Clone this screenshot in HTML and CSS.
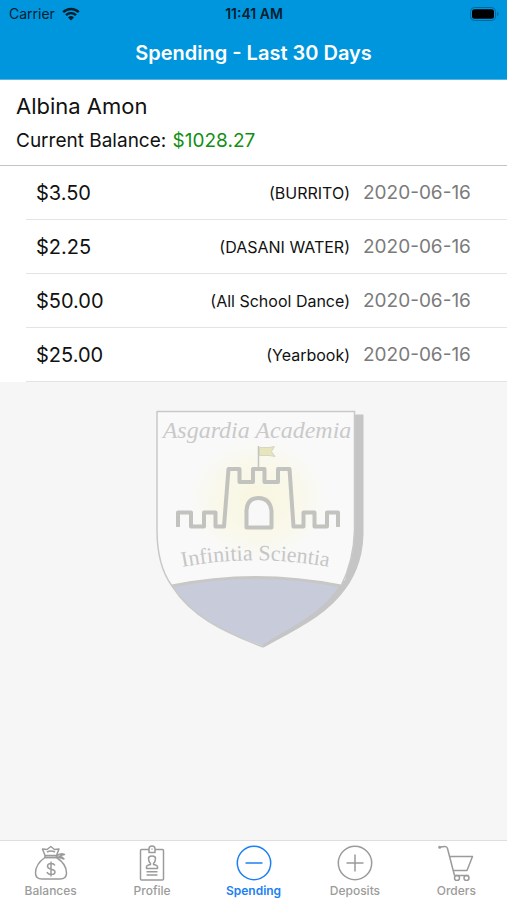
FILE: index.html
```html
<!DOCTYPE html>
<html lang="en">
<head>
<meta charset="utf-8">
<meta name="viewport" content="width=device-width, initial-scale=1">
<title>Spending - Last 30 Days</title>
<link rel="stylesheet" href="styles.css">
</head>
<body>
<header class="top">
  <div class="status">
    <div class="status-side">
      <span>Carrier</span>
      <svg class="wifi" viewBox="0 0 18 14" aria-hidden="true">
        <path d="M1.2 5.2a11 11 0 0 1 15.6 0M4 8.2a7 7 0 0 1 10 0" fill="none" stroke="currentColor" stroke-width="2.4"/>
        <path d="M9 13.6 6 10.5a4.300 4.300 0 0 1 6 0z" fill="currentColor"/>
      </svg>
    </div>
    <span class="clock">11:41 AM</span>
    <div class="status-side status-end">
      <svg class="battery" viewBox="0 0 30 14" aria-hidden="true">
        <rect x="1.500" y=".5" width="25" height="13" rx="4" fill="none" stroke="#05669b"/>
        <rect x="3" y="2.300" width="22" height="9.400" rx="2.500" fill="#000"/>
        <path d="M28 5v4q1.600-.6 1.600-2t-1.600-2z" fill="#05669b"/>
      </svg>
    </div>
  </div>
  <h1 class="title">Spending - Last 30 Days</h1>
</header>

<main class="content">
  <section class="account">
    <h2 class="name">Albina Amon</h2>
    <p class="balance">Current Balance: <span class="amount">$1028.27</span></p>
  </section>

  <div class="list">
    <table class="spending">
      <tbody>
        <tr><td class="price">$3.50</td><td class="item">(BURRITO)</td><td class="date">2020-06-16</td></tr>
        <tr><td class="price">$2.25</td><td class="item">(DASANI WATER)</td><td class="date">2020-06-16</td></tr>
        <tr><td class="price">$50.00</td><td class="item">(All School Dance)</td><td class="date">2020-06-16</td></tr>
        <tr><td class="price">$25.00</td><td class="item">(Yearbook)</td><td class="date">2020-06-16</td></tr>
      </tbody>
    </table>
  </div>

  <svg class="crest" viewBox="143 400 221 250" role="img" aria-label="Asgardia Academia crest">
    <defs>
      <radialGradient id="glow">
        <stop offset="0" stop-color="#f8f6e0"/>
        <stop offset=".6" stop-color="#f9f8ea"/>
        <stop offset="1" stop-color="#f9f9f9"/>
      </radialGradient>
      <path id="motto" d="M183 567Q256 553 334 568"/>
    </defs>
    <path d="M354 414.500H363.500V534C363 560 354 580 340 596C322 617 296 630 263.500 647.500L250 638L345 580L354 540Z" fill="#c5c5c5"/>
    <path d="M157 411.500H354.500V530C354 552 349 570 341 586C325 611 297 626 263 646C222 631 191 617 172 586C161 571 157 553 157 530Z" fill="#f9f9f9"/>
    <ellipse cx="258" cy="500" rx="68" ry="60" fill="url(#glow)"/>
    <path d="M172 586Q255 569 341 586C325 612 297 626 263 646C222 631 191 615 172 586Z" fill="#c8cbda"/>
    <path d="M172 586Q255 569 341 586" fill="none" stroke="#c7c8c5" stroke-width="3"/>
    <path d="M341 586C325 612 297 626 263 646" fill="none" stroke="#c5c5c5" stroke-width="3"/>
    <path d="M157 411.500H354.500V530C354 552 349 570 341 586M263 647C222 631 191 616 172 586C161 571 157 553 157 530V411" fill="none" stroke="#c8c9c7" stroke-width="1.500"/>
    <path d="M178 527V512.500H191V526.500H204V512.500H215.500V526.500H224L228.500 469H239.500V482H253V469H264.500V482H278V469H289.500L293.500 526.500H303.500V512.500H314.500V526.500H327V512.500H338V527" fill="none" stroke="#c2c2bf" stroke-width="4" stroke-linejoin="round"/>
    <path d="M246.500 527.500V511Q247 498 258.500 498T271.500 511V527.500Z" fill="#f8f8f8" stroke="#c2c2bf" stroke-width="4" stroke-linejoin="round"/>
    <path d="M258.500 446V468" stroke="#c4c4c0" stroke-width="1.500"/>
    <path d="M259.500 447.500H269L274.500 446.500L271.500 451.500L275 456.500L269 455.500H259.500Z" fill="#e7e5bb" stroke="#cfcfbd" stroke-width=".8"/>
    <text class="crest-name" x="257" y="438" text-anchor="middle">Asgardia Academia</text>
    <text class="crest-motto" text-anchor="middle"><textPath href="#motto" startOffset="48%">Infinitia Scientia</textPath></text>
  </svg>
</main>

<nav class="tabs">
  <a class="tab" href="#balances">
    <svg class="icon" viewBox="0 0 36 36" aria-hidden="true">
      <path d="M12 12.500Q2.500 19 2.500 28Q2.500 34 9 34H27Q33.500 34 33.500 28Q33.500 19 23.500 12.500Z"/>
      <path d="M12 10.500H23.500V12.500H12ZM12 10.500L9.500 4L14 4.500L17.800 1.500L21.500 4.500L26 4L23.500 10.500M14 7Q18 5 22 7M23.500 11.500Q27 7.500 31.500 9.500Q28 10 26 11.500Q29 11 31 14Q27.500 12 24 12.500"/>
      <path d="M22 20.500Q21 18.500 18 18.500Q14.500 18.500 14.500 21.300Q14.500 23.500 18 24.200Q22 25 22 27Q22 29.500 18 29.500Q15 29.500 14 27M18 16.500V31.500"/>
    </svg>
    <span>Balances</span>
  </a>
  <a class="tab" href="#profile">
    <svg class="icon" viewBox="0 0 36 36" aria-hidden="true">
      <path d="M15 4.500H7.500Q6.500 4.500 6.500 5.500V34Q6.500 35 7.500 35H28.500Q29.500 35 29.500 34V5.500Q29.500 4.500 28.500 4.500H21"/>
      <path d="M15 7.500V4Q15 1 18 1T21 4V7.500ZM17.500 4H18.500"/>
      <path d="M12.500 23.500V21.500Q12.500 20.500 16.500 19.500V18.500Q14.500 16.500 14.500 13.500Q14.500 11 18 11T21.500 13.500Q21.500 16.500 19.500 18.500V19.500Q23.500 20.500 23.500 21.500V23.500ZM12.500 26.800H23.500M12.500 30H23.500"/>
    </svg>
    <span>Profile</span>
  </a>
  <a class="tab active" href="#spending" aria-current="page">
    <svg class="icon" viewBox="0 0 36 36" aria-hidden="true"><circle cx="18" cy="18" r="16.700"/><path d="M9.500 18H26.500"/></svg>
    <span>Spending</span>
  </a>
  <a class="tab" href="#deposits">
    <svg class="icon" viewBox="0 0 36 36" aria-hidden="true"><circle cx="18" cy="18" r="16.700"/><path d="M9.500 18H26.500M18 9.500V26.500"/></svg>
    <span>Deposits</span>
  </a>
  <a class="tab" href="#orders">
    <svg class="icon" viewBox="0 0 36 36" aria-hidden="true">
      <circle cx="1.700" cy="2.300" r=".8"/>
      <path d="M2.500 2Q4 1.500 7 1.500Q9 1.500 9.500 3.500L16.500 30.500M12 11.500H34.500L29 25.500H15.300M16.500 30.500H30.500"/>
      <circle cx="19" cy="33" r="2.500"/><circle cx="28.500" cy="33" r="2.500"/>
    </svg>
    <span>Orders</span>
  </a>
</nav>
</body>
</html>
```
FILE: styles.css
```css
* {
  box-sizing: border-box;
}

body {
  margin: 0;
  min-height: 100vh;
  display: flex;
  flex-direction: column;
  background: #f6f6f6;
  color: #111;
  font-family: Inter, "Liberation Sans", sans-serif;
}

.top {
  background: #0096dd;
  border-bottom: 1px solid #55b5e2;
}

.status {
  display: flex;
  align-items: center;
  height: 27px;
  padding: 0 8px 0 9px;
  color: #04202f;
  font-size: 14px;
}

.status-side {
  flex: 1;
  display: flex;
  align-items: center;
  gap: 7px;
}

.status-end {
  justify-content: flex-end;
}

.wifi {
  width: 18px;
  height: 14px;
}

.battery {
  width: 30px;
  height: 14px;
}

.clock {
  font-weight: 600;
}

.title {
  margin: 0;
  padding: 14px 0;
  color: #fff;
  font-size: 20px;
  font-weight: 600;
  line-height: 24px;
  text-align: center;
}

.content {
  flex: 1;
}

.account {
  padding: 12px 16px;
  background: #fff;
  border-bottom: 1px solid #c4c4c4;
}

.name {
  margin: 0 0 9px;
  font-size: 22px;
  font-weight: 400;
  line-height: 28px;
}

.balance {
  margin: 0;
  font-size: 19px;
  line-height: 24px;
}

.amount {
  margin-left: 1px;
  color: #128f12;
}

.list {
  padding-left: 26px;
  background: #fff;
}

.spending {
  width: 100%;
  border-spacing: 0;
}

.spending td {
  height: 54px;
  padding: 0;
  border-bottom: 1px solid #e4e4e4;
}

.spending .price {
  padding-left: 10px;
  font-size: 20px;
}

.spending .item {
  padding-right: 13px;
  font-size: 16px;
  text-align: right;
}

.spending .date {
  width: 144px;
  color: #7b7b7b;
  font-size: 19px;
}

.crest {
  display: block;
  width: 221px;
  height: 250px;
  margin: 18px auto;
}

.crest-name {
  fill: #c9c9c9;
  font-family: "Liberation Serif", serif;
  font-size: 24px;
  font-style: italic;
}

.crest-motto {
  fill: #c6c6c6;
  font-family: "Liberation Serif", serif;
  font-size: 22px;
}

.tabs {
  display: flex;
  height: 60px;
  background: #fff;
  border-top: 1px solid #dedede;
}

.tab {
  flex: 1;
  display: flex;
  flex-direction: column;
  align-items: center;
  gap: 2px;
  padding-top: 4px;
  color: #9b9b9b;
  font-size: 12px;
  font-weight: 500;
  line-height: 16px;
  text-decoration: none;
}

.active {
  color: #1c80f3;
  font-weight: 600;
}

.icon {
  width: 36px;
  height: 36px;
  fill: none;
  stroke: currentColor;
  stroke-width: 1.5;
  stroke-linejoin: round;
}
```
